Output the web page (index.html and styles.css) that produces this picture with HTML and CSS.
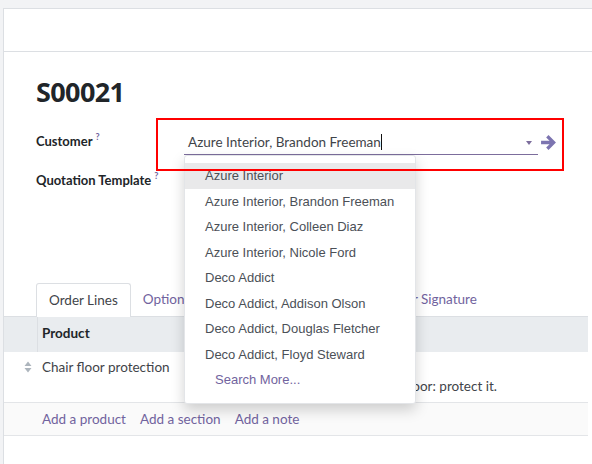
FILE: index.html
```html
<!DOCTYPE html>
<html>
<head>
<meta charset="utf-8">
<link rel="stylesheet" href="styles.css">
</head>
<body>
<div class="sheet">
  <div class="statusbar"></div>
  <div class="content">
    <h1 class="title">S00021</h1>
    <div class="field-row customer-row">
      <div class="label">Customer<sup>?</sup></div>
      <div class="input-wrap">
        <div class="input">
          <span class="value">Azure Interior, Brandon Freeman<span class="cursor"></span></span>
          <span class="caret"></span>
        </div>
        <svg class="arrow" width="17" height="17" viewBox="0 0 16 16"><path d="M8 1 L15 8 L8 15 L5.8 12.8 L9 9.7 L1 9.7 L1 6.3 L9 6.3 L5.8 3.2 Z" fill="#7c74b0"/></svg>
        <ul class="dropdown">
          <li class="active">Azure Interior</li>
          <li>Azure Interior, Brandon Freeman</li>
          <li>Azure Interior, Colleen Diaz</li>
          <li>Azure Interior, Nicole Ford</li>
          <li>Deco Addict</li>
          <li>Deco Addict, Addison Olson</li>
          <li>Deco Addict, Douglas Fletcher</li>
          <li>Deco Addict, Floyd Steward</li>
          <li class="more">Search More...</li>
        </ul>
      </div>
    </div>
    <div class="field-row">
      <div class="label">Quotation Template<sup>?</sup></div>
    </div>
  </div>
  <div class="tabs">
    <div class="tab active">Order Lines</div>
    <div class="tab">Optional Products</div>
    <div class="tab">Other Info</div>
    <div class="tab">Customer Signature</div>
  </div>
  <div class="table">
    <div class="thead">
      <div class="handle-col"></div>
      <div class="th">Product</div>
    </div>
    <div class="row">
      <div class="handle-col">
        <svg width="8" height="12" viewBox="0 0 8 12"><path d="M4 0.5 L7.5 5 L0.5 5 Z M0.5 7 L7.5 7 L4 11.5 Z" fill="#adb5bd"/></svg>
      </div>
      <div class="cell product">Chair floor protection</div>
      <div class="cell desc">Chair floor protection<br>Office chairs can harm your floor: protect it.</div>
    </div>
    <div class="addrow">
      <a>Add a product</a>
      <a>Add a section</a>
      <a>Add a note</a>
    </div>
  </div>
  <div class="highlight"></div>
</div>
</body>
</html>
```

FILE: styles.css
```css
* { box-sizing: border-box; }
html, body { margin: 0; padding: 0; }
body {
  background: #f2f3f5;
  font-family: Lato, "Open Sans", sans-serif;
  font-size: 13px;
  color: #212529;
  width: 592px;
  height: 464px;
  overflow: hidden;
}
.sheet {
  position: relative;
  margin: 8px 0 0 3px;
  width: 600px;
  height: 456px;
  background: #fff;
  border-left: 1px solid #dcdfe3;
  border-top: 1px solid #dcdfe3;
}
.statusbar {
  height: 43px;
  border-bottom: 1px solid #dcdfe3;
}
.content {
  padding: 0 0 0 32px;
}
.title {
  margin: 25px 0 0 0;
  height: 54px;
  font-family: "Open Sans", sans-serif;
  font-weight: 700;
  font-size: 27px;
  letter-spacing: -0.6px;
  line-height: 30px;
  color: #212529;
}
.field-row {
  display: flex;
  align-items: flex-start;
}
.customer-row { height: 39px; }
.label {
  width: 148px;
  font-weight: 700;
  color: #212529;
  line-height: 20px;
  padding-top: 0;
}
.label sup {
  color: #71639e;
  font-size: 9px;
  font-weight: 700;
  margin-left: 3px;
  vertical-align: 6px;
  line-height: 0;
}
.input-wrap {
  position: relative;
  display: flex;
  align-items: flex-start;
}
.input {
  position: relative;
  width: 354px;
  height: 24px;
  border-bottom: 1px solid #7c6d9c;
  padding: 1px 0 0 4px;
  line-height: 20px;
  color: #3f4449;
  font-size: 13.5px;
}
.cursor {
  display: inline-block;
  width: 1px;
  height: 16px;
  background: #111;
  vertical-align: -3px;
}
.caret {
  position: absolute;
  right: 6px;
  top: 10px;
  width: 0;
  height: 0;
  border-left: 3.5px solid transparent;
  border-right: 3.5px solid transparent;
  border-top: 4px solid #7c6d9c;
}
.arrow {
  margin: 3px 0 0 2px;
}
.dropdown {
  position: absolute;
  left: 0;
  top: 24px;
  width: 232px;
  margin: 0;
  padding: 7px 0 10px 0;
  list-style: none;
  background: #fff;
  border: 1px solid #e3e5e8;
  border-radius: 3px;
  box-shadow: 0 6px 14px rgba(0,0,0,0.18);
  font-family: "Liberation Sans", Arial, sans-serif;
  font-size: 13px;
  color: #4b5057;
  z-index: 5;
}
.dropdown li {
  height: 25.5px;
  line-height: 25.5px;
  padding-left: 20px;
  white-space: nowrap;
}
.dropdown li.active { background: #e9e9ea; }
.dropdown li.more {
  padding-left: 30px;
  color: #71639e;
}
.tabs {
  display: flex;
  margin: 93px 0 0 32px;
  height: 33px;
}
.tab {
  padding: 0 12px;
  line-height: 32px;
  color: #71639e;
  font-size: 13.5px;
  white-space: nowrap;
}
.tab.active {
  color: #3f4449;
  border: 1px solid #dcdfe3;
  border-bottom: none;
  border-radius: 3px 3px 0 0;
  background: #fff;
  margin-bottom: -1px;
  position: relative;
  z-index: 1;
}
.table { width: 584px; }
.thead {
  display: flex;
  height: 36px;
  background: #e9ecef;
  border-top: 1px solid #dcdfe3;
}
.thead .handle-col {
  width: 34px;
  border-right: 1px solid #dcdfe3;
  margin: 0;
}
.th {
  padding-left: 4px;
  line-height: 33px;
  font-weight: 700;
  color: #212529;
  font-size: 13.5px;
}
.row {
  display: flex;
  height: 51px;
  border-bottom: 1px solid #e3e5e8;
  color: #3f4449;
  font-size: 13.5px;
}
.row .handle-col {
  width: 34px;
  display: flex;
  justify-content: flex-end;
  padding: 9px 6px 0 0;
}
.cell { padding-top: 6px; line-height: 19px; }
.cell.product { width: 201px; padding-left: 4px; }
.cell.desc { width: 330px; }
.addrow {
  display: flex;
  gap: 14px;
  height: 33px;
  padding-left: 38px;
  background: #fafafa;
  border-bottom: 1px solid #e3e5e8;
  align-items: center;
}
.addrow a {
  color: #71639e;
  font-size: 13.5px;
}
.highlight {
  position: absolute;
  left: 152px;
  top: 109px;
  width: 408px;
  height: 53px;
  border: 2px solid #ff0000;
  z-index: 10;
  pointer-events: none;
}
```
